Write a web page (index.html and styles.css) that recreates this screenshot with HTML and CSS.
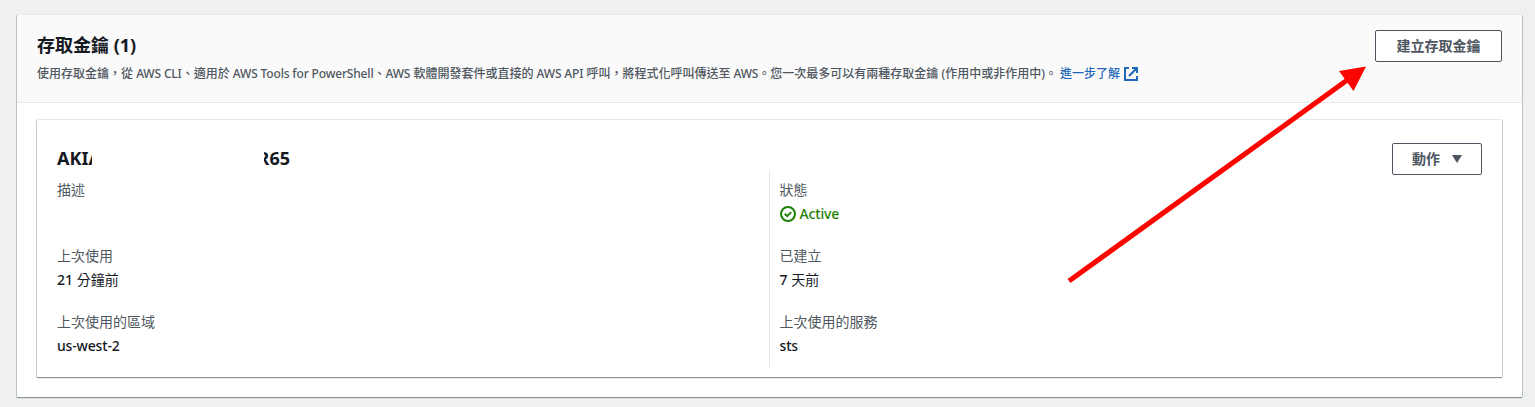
FILE: index.html
```html
<!DOCTYPE html>
<html lang="zh-Hant">
<head>
<meta charset="utf-8">
<title>存取金鑰</title>
<link rel="stylesheet" href="styles.css">
</head>
<body>
<section class="panel">
  <header class="panel-header">
    <div class="heading">
      <h2 class="title">存取金鑰 <span class="count">(1)</span></h2>
      <p class="description">使用存取金鑰，從 <span class="latin">AWS CLI</span>、適用於 <span class="latin">AWS Tools for PowerShell</span>、<span class="latin">AWS</span> 軟體開發套件或直接的 <span class="latin">AWS API</span> 呼叫，將程式化呼叫傳送至 <span class="latin">AWS</span>。您一次最多可以有兩種存取金鑰 (作用中或非作用中)。 <a class="link">進一步了解<svg class="external" viewBox="0 0 16 16"><path d="M6 2H2v12h12v-4M9 2h5v5M6 10l8-8"/></svg></a></p>
    </div>
    <button class="button create">建立存取金鑰</button>
  </header>
  <div class="panel-body">
    <article class="card">
      <div class="card-header">
        <h3 class="key-id"><span class="key-start">AKIA</span><span class="key-end"><span>R65</span></span></h3>
        <button class="button actions">動作<svg class="caret" viewBox="0 0 10 8"><path d="M0 0h10L5 8z"/></svg></button>
      </div>
      <div class="columns">
        <dl class="column">
          <div class="field"><dt>描述</dt><dd></dd></div>
          <div class="field"><dt>上次使用</dt><dd>21 <span class="cjk">分鐘前</span></dd></div>
          <div class="field"><dt>上次使用的區域</dt><dd class="latin">us-west-2</dd></div>
        </dl>
        <dl class="column divided">
          <div class="field"><dt>狀態</dt><dd class="status latin"><svg class="check" viewBox="0 0 16 16"><circle cx="8" cy="8" r="7"/><path d="M4.8 7.8l2.4 2.3 4-4"/></svg>Active</dd></div>
          <div class="field"><dt>已建立</dt><dd>7 <span class="cjk">天前</span></dd></div>
          <div class="field"><dt>上次使用的服務</dt><dd class="latin">sts</dd></div>
        </dl>
      </div>
    </article>
  </div>
</section>
<svg class="arrow" viewBox="0 0 1535 407"><path class="shaft" d="M1069 281L1348 79.5"/><path class="head" d="M1366 66.5L1339 71L1353.5 91z"/></svg>
</body>
</html>
```
FILE: styles.css
```css
* { box-sizing: border-box; }

body {
  margin: 0;
  height: 407px;
  padding: 15px 13px 0 17px;
  overflow: hidden;
  background: #eff1f1;
  color: #16191f;
  font: 14px/22px "Noto Sans", "Noto Sans CJK TC", sans-serif;
}

h2, h3, p, dl, dd { margin: 0; }

.panel {
  height: 382px;
  background: #fff;
  box-shadow: 0 1px 1px #8a9497, -1px 0 0 #c6cbcc, 1px 0 0 #c6cbcc, 0 -1px 0 #e7eaea;
}

.panel-header {
  display: flex;
  justify-content: space-between;
  align-items: flex-start;
  height: 88px;
  padding: 15px 20px 0;
  background: #fafafa;
  border-bottom: 1px solid #e4e8e8;
}

.title {
  font-size: 18px;
  line-height: 30px;
  font-weight: 700;
}

.description {
  font-size: 12px;
  line-height: 18px;
  margin-top: 5px;
  color: #4f5761;
  font-weight: 500;
  white-space: nowrap;
}

.latin { letter-spacing: -0.16px; }

.link { color: #1f68b8; }

.external {
  width: 16px;
  height: 16px;
  margin-left: 3px;
  vertical-align: -4px;
  fill: none;
  stroke: #1f68b8;
  stroke-width: 2;
}

.button {
  display: flex;
  align-items: center;
  justify-content: center;
  height: 32px;
  padding: 0;
  background: #fff;
  border: 1px solid #4d5560;
  border-radius: 2px;
  color: #4d5560;
  font: 700 14px/20px "Noto Sans", "Noto Sans CJK TC", sans-serif;
}

.create { width: 127px; padding-bottom: 1px; }
.actions { width: 90px; }
.caret { width: 10px; height: 8px; margin-left: 12px; fill: #4d5560; }

.panel-body { padding: 17px 20px 0; }

.card {
  height: 257px;
  padding: 23px 20px 0;
  background: #fff;
  box-shadow: 0 1px 1px #8a9497, -1px 0 0 #d0d7d8, 1px 0 0 #d0d5d6, 0 -1px 0 #e7eaea;
}

.card-header {
  display: flex;
  justify-content: space-between;
  height: 27px;
}

.key-id {
  display: flex;
  font-size: 18px;
  line-height: 30px;
  height: 32px;
}

.key-start { width: 35px; overflow: hidden; }

.key-end {
  display: flex;
  justify-content: flex-end;
  width: 26px;
  margin-left: 172px;
  overflow: hidden;
}

.columns { display: flex; }
.column { flex: 0 0 712px; height: 197px; padding-top: 9px; }
.divided { border-left: 1px solid #e4e8e8; padding-left: 9.5px; }
.field { height: 66px; }
.field dt { height: 24px; color: #4f5761; }
.field dd { height: 22px; font-weight: 500; }
.field .cjk { font-weight: 400; }
.field .status { display: flex; align-items: center; color: #1d8102; }
.check { width: 16px; height: 16px; margin-right: 4px; fill: none; stroke: #1d8102; stroke-width: 2; }

.arrow {
  position: absolute;
  inset: 0;
  width: 1535px;
  height: 407px;
  pointer-events: none;
}

.shaft { fill: none; stroke: #fb0500; stroke-width: 5.2; }
.head { fill: #fb0500; }
```
